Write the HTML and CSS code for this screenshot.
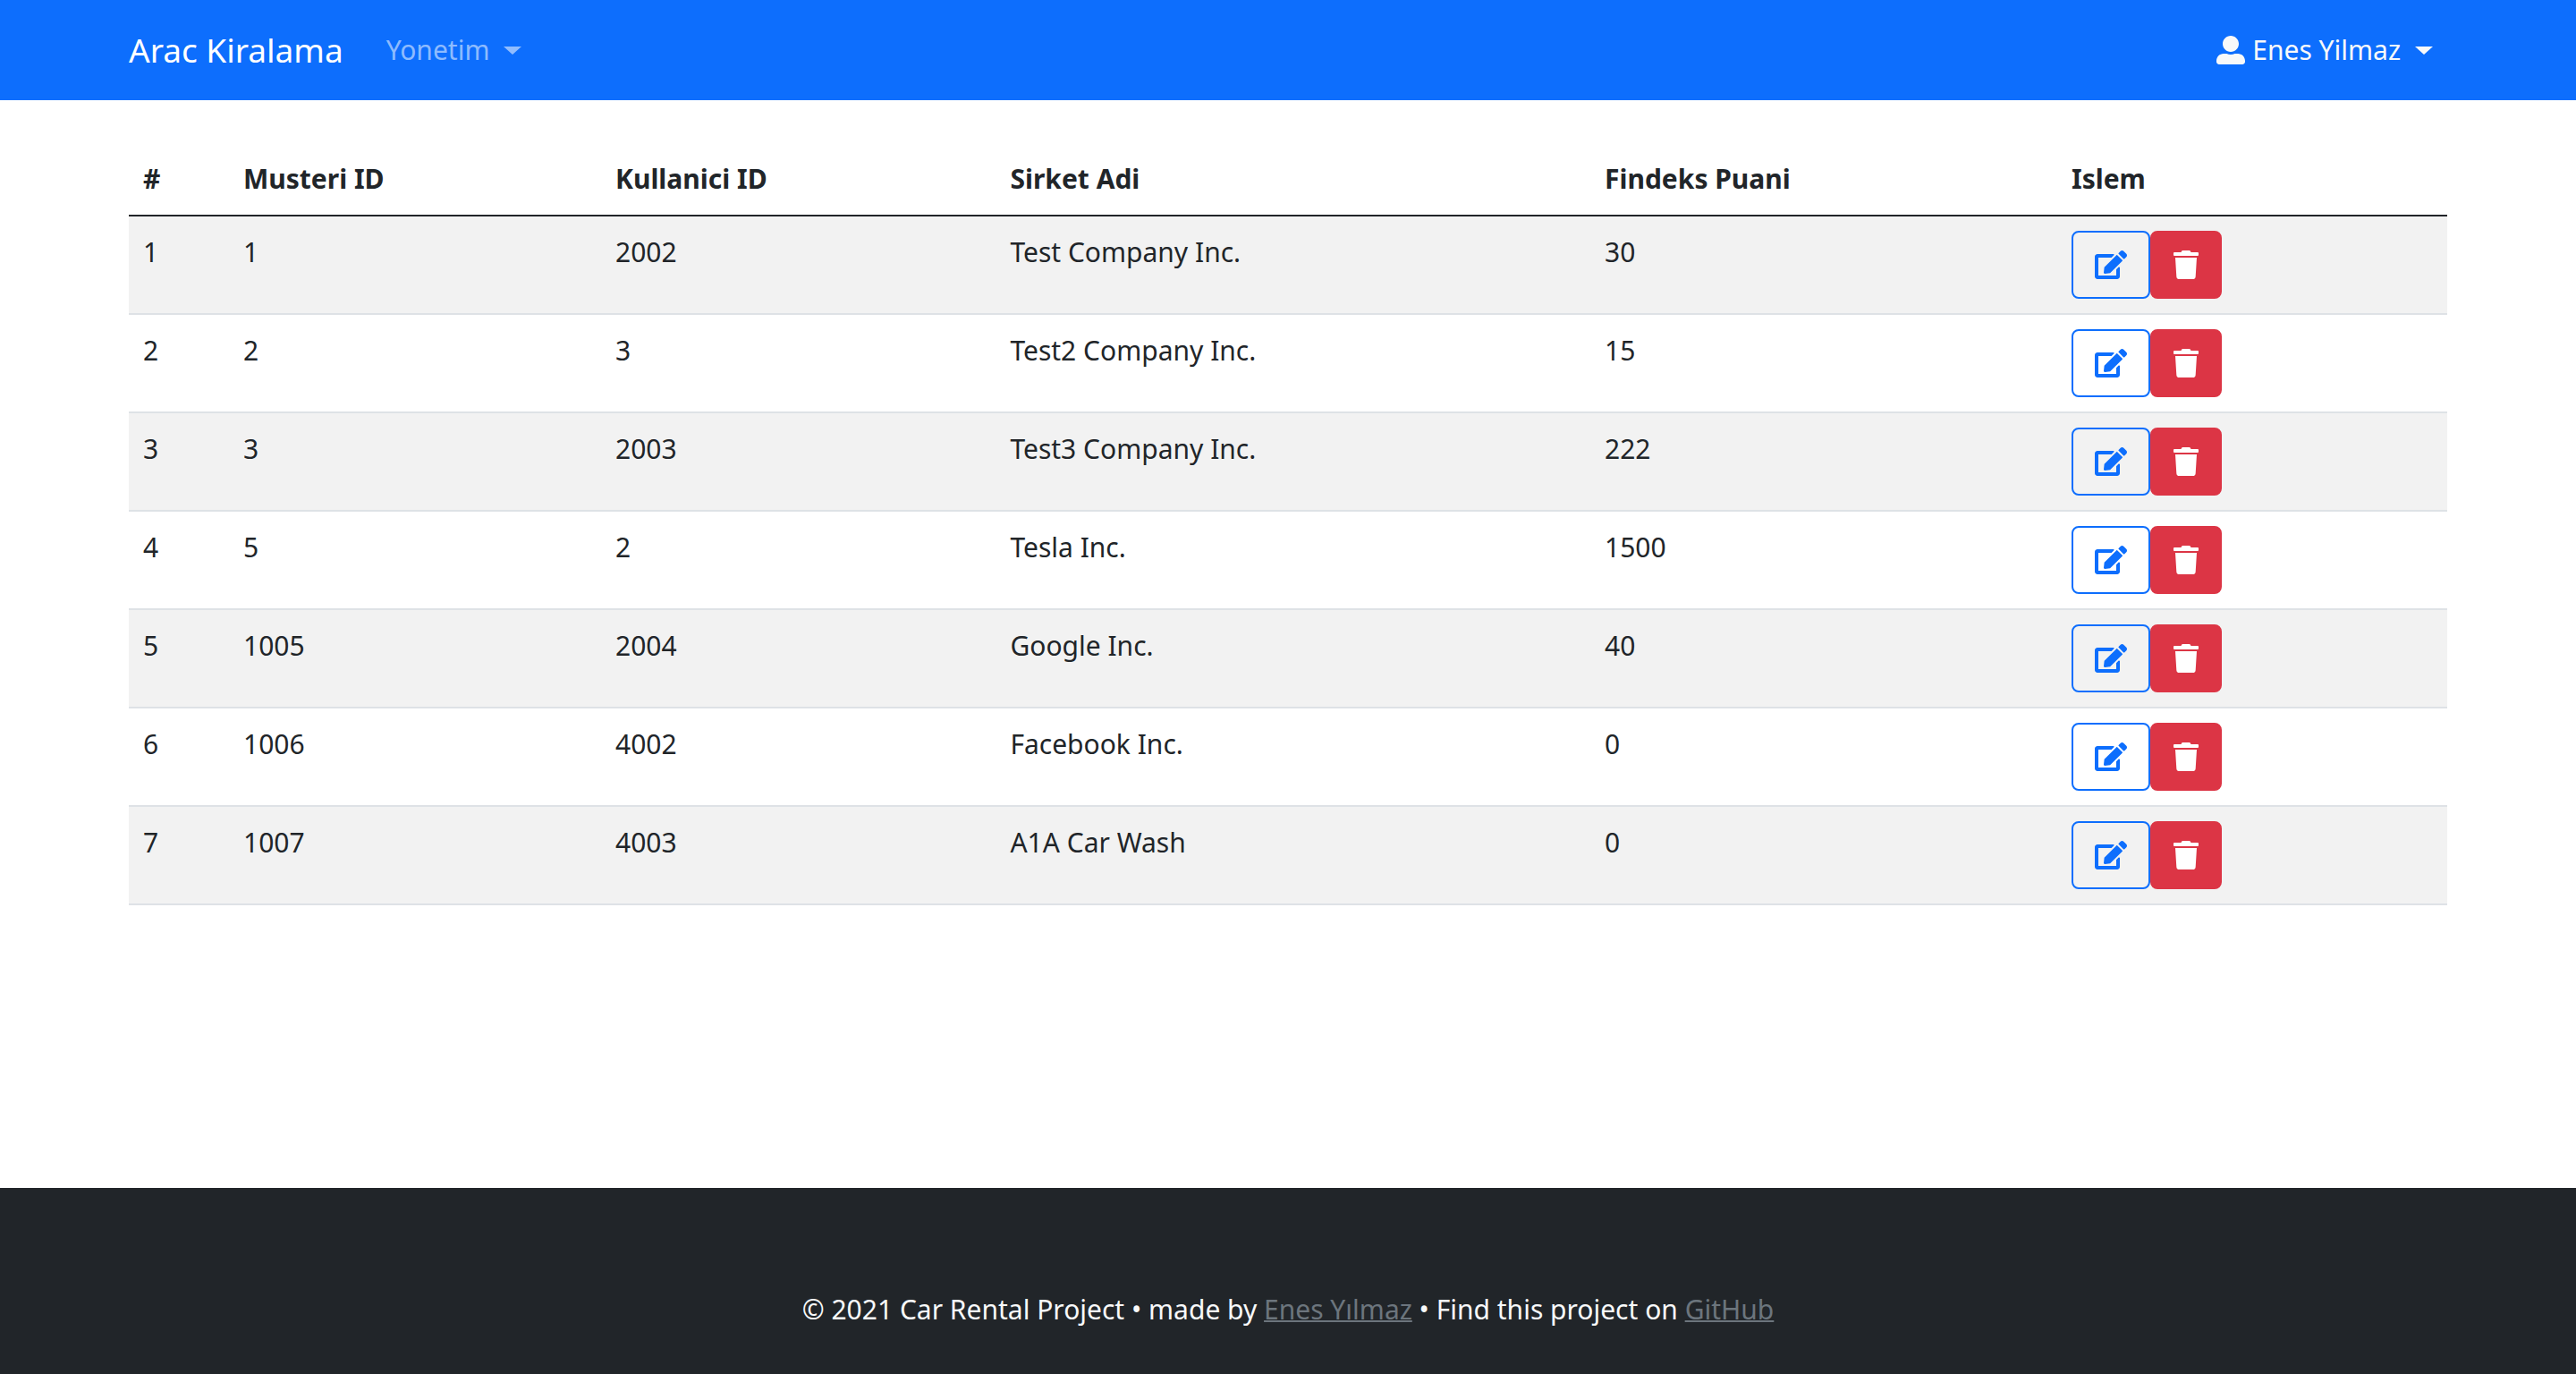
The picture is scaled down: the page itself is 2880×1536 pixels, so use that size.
FILE: index.html
```html
<!DOCTYPE html>
<html lang="tr">
<head>
<meta charset="utf-8">
<meta name="viewport" content="width=device-width, initial-scale=1">
<title>Arac Kiralama</title>
<link rel="stylesheet" href="styles.css">
</head>
<body>
<svg class="sprite" aria-hidden="true">
  <symbol id="icon-user" viewBox="0 0 512 512"><path d="M256 288c79.500 0 144-64.500 144-144S335.500 0 256 0 112 64.500 112 144s64.500 144 144 144zm128 32h-55.100c-22.200 10.200-46.900 16-72.900 16s-50.600-5.800-72.900-16H128C57.300 320 0 377.300 0 448v16c0 26.500 21.500 48 48 48h416c26.500 0 48-21.500 48-48v-16c0-70.700-57.300-128-128-128z"/></symbol>
  <symbol id="icon-edit" viewBox="0 0 576 512"><path d="M402.600 83.200l90.200 90.200c3.800 3.800 3.800 10 0 13.800L274.400 405.600l-92.800 10.300c-12.400 1.400-22.900-9.100-21.500-21.500l10.300-92.800L388.800 83.200c3.800-3.800 10-3.800 13.800 0zm162-22.900l-48.800-48.800c-15.200-15.200-39.900-15.200-55.200 0l-35.400 35.400c-3.800 3.800-3.800 10 0 13.800l90.200 90.200c3.800 3.800 10 3.800 13.800 0l35.400-35.400c15.200-15.300 15.200-40 0-55.200zM384 346.200V448H64V128h229.800c3.200 0 6.200-1.300 8.500-3.500l40-40c7.600-7.600 2.200-20.500-8.500-20.500H48C21.500 64 0 85.500 0 112v352c0 26.500 21.500 48 48 48h352c26.500 0 48-21.500 48-48V306.200c0-10.700-12.900-16-20.500-8.500l-40 40c-2.200 2.300-3.500 5.300-3.500 8.500z"/></symbol>
  <symbol id="icon-trash" viewBox="0 0 448 512"><path d="M432 32H312l-9.400-18.700A24 24 0 0 0 281.100 0H166.800a23.720 23.720 0 0 0-21.400 13.300L136 32H16A16 16 0 0 0 0 48v32a16 16 0 0 0 16 16h416a16 16 0 0 0 16-16V48a16 16 0 0 0-16-16zM53.200 467a48 48 0 0 0 47.900 45h245.800a48 48 0 0 0 47.900-45L416 128H32z"/></symbol>
</svg>

<header class="navbar">
  <nav class="container navbar-inner">
    <a class="brand" href="#">Arac Kiralama</a>
    <button class="nav-toggle nav-muted" type="button" aria-haspopup="true">Yonetim<span class="caret"></span></button>
    <button class="nav-toggle nav-user" type="button" aria-haspopup="true"><svg class="icon-user"><use href="#icon-user"/></svg>Enes Yilmaz<span class="caret"></span></button>
  </nav>
</header>

<main class="container content">
  <table class="table">
    <colgroup>
      <col class="col-no"><col class="col-customer"><col class="col-user"><col class="col-company"><col class="col-score"><col class="col-action">
    </colgroup>
    <thead>
      <tr><th scope="col">#</th><th scope="col">Musteri ID</th><th scope="col">Kullanici ID</th><th scope="col">Sirket Adi</th><th scope="col">Findeks Puani</th><th scope="col">Islem</th></tr>
    </thead>
    <tbody>
      <tr><td>1</td><td>1</td><td>2002</td><td>Test Company Inc.</td><td>30</td><td><div class="actions"><button class="btn btn-edit" type="button" aria-label="Duzenle"><svg class="icon-edit"><use href="#icon-edit"/></svg></button><button class="btn btn-delete" type="button" aria-label="Sil"><svg class="icon-trash"><use href="#icon-trash"/></svg></button></div></td></tr>
      <tr><td>2</td><td>2</td><td>3</td><td>Test2 Company Inc.</td><td>15</td><td><div class="actions"><button class="btn btn-edit" type="button" aria-label="Duzenle"><svg class="icon-edit"><use href="#icon-edit"/></svg></button><button class="btn btn-delete" type="button" aria-label="Sil"><svg class="icon-trash"><use href="#icon-trash"/></svg></button></div></td></tr>
      <tr><td>3</td><td>3</td><td>2003</td><td>Test3 Company Inc.</td><td>222</td><td><div class="actions"><button class="btn btn-edit" type="button" aria-label="Duzenle"><svg class="icon-edit"><use href="#icon-edit"/></svg></button><button class="btn btn-delete" type="button" aria-label="Sil"><svg class="icon-trash"><use href="#icon-trash"/></svg></button></div></td></tr>
      <tr><td>4</td><td>5</td><td>2</td><td>Tesla Inc.</td><td>1500</td><td><div class="actions"><button class="btn btn-edit" type="button" aria-label="Duzenle"><svg class="icon-edit"><use href="#icon-edit"/></svg></button><button class="btn btn-delete" type="button" aria-label="Sil"><svg class="icon-trash"><use href="#icon-trash"/></svg></button></div></td></tr>
      <tr><td>5</td><td>1005</td><td>2004</td><td>Google Inc.</td><td>40</td><td><div class="actions"><button class="btn btn-edit" type="button" aria-label="Duzenle"><svg class="icon-edit"><use href="#icon-edit"/></svg></button><button class="btn btn-delete" type="button" aria-label="Sil"><svg class="icon-trash"><use href="#icon-trash"/></svg></button></div></td></tr>
      <tr><td>6</td><td>1006</td><td>4002</td><td>Facebook Inc.</td><td>0</td><td><div class="actions"><button class="btn btn-edit" type="button" aria-label="Duzenle"><svg class="icon-edit"><use href="#icon-edit"/></svg></button><button class="btn btn-delete" type="button" aria-label="Sil"><svg class="icon-trash"><use href="#icon-trash"/></svg></button></div></td></tr>
      <tr><td>7</td><td>1007</td><td>4003</td><td>A1A Car Wash</td><td>0</td><td><div class="actions"><button class="btn btn-edit" type="button" aria-label="Duzenle"><svg class="icon-edit"><use href="#icon-edit"/></svg></button><button class="btn btn-delete" type="button" aria-label="Sil"><svg class="icon-trash"><use href="#icon-trash"/></svg></button></div></td></tr>
    </tbody>
  </table>
</main>

<footer class="footer">
  <p class="footer-text">© 2021 Car Rental Project • made by <a href="#">Enes Yılmaz</a> • Find this project on <a href="#">GitHub</a></p>
</footer>
</body>
</html>
```
FILE: styles.css
```css
* {
  box-sizing: border-box;
}

body {
  margin: 0;
  min-height: 100vh;
  display: flex;
  flex-direction: column;
  background: #fff;
  color: #212529;
  font-family: "Segoe UI", "Noto Sans", "Open Sans", sans-serif;
  font-size: 30px;
  line-height: 48px;
}

.sprite {
  display: none;
}

svg {
  display: block;
  flex: none;
  fill: currentColor;
}

.container {
  width: 100%;
  max-width: 2640px;
  margin: 0 auto;
  padding: 0 24px;
}

/* Navbar */
.navbar {
  background: #0d6efd;
}

.navbar-inner {
  display: flex;
  align-items: center;
  padding-top: 26px;
  padding-bottom: 26px;
}

.brand {
  margin-right: 48px;
  color: #fff;
  font-size: 37px;
  line-height: 60px;
  text-decoration: none;
}

.nav-toggle {
  display: flex;
  align-items: center;
  padding: 0;
  border: 0;
  background: none;
  color: #f8f9fa;
  font: inherit;
  cursor: pointer;
}

.nav-muted {
  color: rgba(255, 255, 255, 0.55);
}

.nav-user {
  margin-left: auto;
  margin-right: 16px;
}

.caret {
  margin-left: 16px;
  border-top: 9px solid;
  border-left: 10px solid transparent;
  border-right: 10px solid transparent;
}

.icon-user {
  width: 32px;
  height: 32px;
  margin-right: 8px;
}

/* Customer table */
.content {
  flex: 1;
  padding-top: 48px;
  padding-bottom: 48px;
}

.table {
  width: 100%;
  table-layout: fixed;
  border-collapse: separate;
  border-spacing: 0;
}

.col-no { width: 4.32%; }
.col-customer { width: 16.05%; }
.col-user { width: 17.03%; }
.col-company { width: 25.64%; }
.col-score { width: 20.14%; }
.col-action { width: 16.82%; }

th,
td {
  padding: 16px;
  border-bottom: 2px solid #dee2e6;
  text-align: left;
  vertical-align: top;
}

th {
  border-bottom-color: #212529;
  font-weight: 700;
}

tbody tr:nth-child(odd) {
  background: #f2f2f2;
}

.actions {
  display: flex;
}

.btn {
  padding: 20px 24px;
  border: 2px solid;
  border-radius: 8px;
  cursor: pointer;
}

.btn-edit {
  border-color: #0d6efd;
  background: transparent;
  color: #0d6efd;
}

.btn-delete {
  border-color: #dc3545;
  background: #dc3545;
  color: #fff;
}

.icon-edit {
  width: 36px;
  height: 32px;
}

.icon-trash {
  width: 28px;
  height: 32px;
}

/* Footer */
.footer {
  padding: 112px 24px 48px;
  background: #212529;
  color: #f8f9fa;
  text-align: center;
}

.footer-text {
  margin: 0;
}

.footer a {
  color: #6c757d;
  text-decoration-thickness: 2px;
}
```
